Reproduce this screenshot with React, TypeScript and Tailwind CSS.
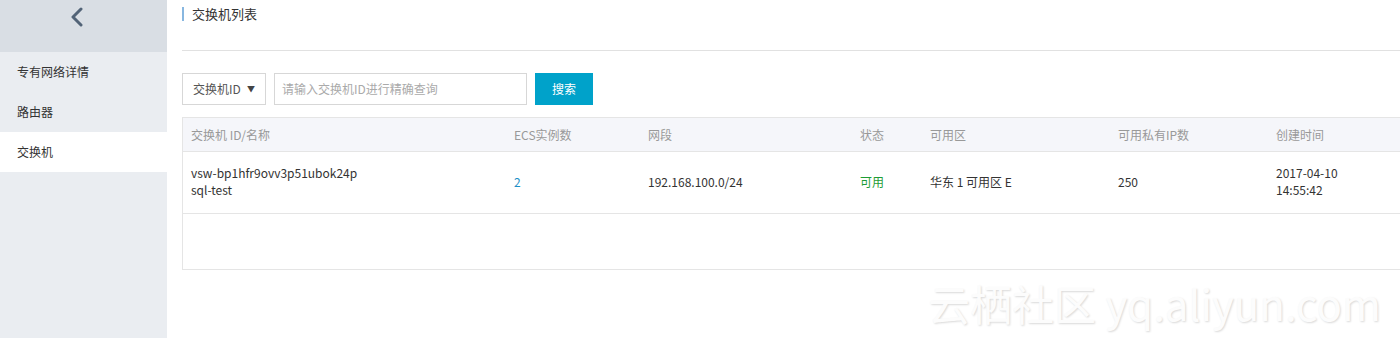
import React from "react";

const font = { fontFamily: '"Noto Sans CJK SC", "Noto Sans", sans-serif' };

export default function App() {
  const cols = "grid grid-cols-[323px_134px_212px_70px_188px_158px_1fr]";
  return (
    <div className="relative flex h-[338px] w-[1400px] overflow-hidden bg-white text-[12px] text-[#333]" style={font}>
      <aside className="flex w-[167px] shrink-0 flex-col bg-[#eaedf1]">
        <div className="flex h-[52px] items-start justify-center bg-[#d9dee4] pt-[7px]">
          <svg width="14" height="20" viewBox="0 0 14 20" className="ml-[-14px]">
            <path d="M11 2 L3 10 L11 18" fill="none" stroke="#526377" strokeWidth="3" strokeLinecap="round" strokeLinejoin="round" />
          </svg>
        </div>
        <div className="flex h-10 items-center pl-[17px]">专有网络详情</div>
        <div className="flex h-10 items-center pl-[17px]">路由器</div>
        <div className="flex h-10 items-center bg-white pl-[17px]">交换机</div>
      </aside>
      <main className="flex-1 overflow-hidden pl-[15px]">
        <div className="flex h-[51px] items-start border-b border-[#e1e1e1] pt-[7px]">
          <span className="h-[14px] w-[2px] bg-[#88b7e0]" />
          <span className="ml-[8px] mt-[-2px] text-[13px] leading-[18px] text-[#333]">交换机列表</span>
        </div>
        <div className="mt-[22px] flex h-[32px] items-stretch">
          <div className="flex w-[84px] items-center justify-between border border-[#d7d7d7] pl-[10px] pr-[10px] text-[#555]">
            <span>交换机ID</span>
            <span className="text-[8px] text-[#444]">▼</span>
          </div>
          <div className="ml-[8px] flex w-[253px] items-center border border-[#d7d7d7] pl-[7px] text-[#aaa]">
            请输入交换机ID进行精确查询
          </div>
          <button className="ml-[8px] w-[58px] bg-[#00a2ca] text-[12px] text-white">搜索</button>
        </div>
        <div className="mt-[12px] w-[1226px] border border-[#e5e5e5]">
          <div className={`${cols} h-[33px] items-center bg-[#f5f6fa] text-[#999]`}>
            <div className="pl-[8px]">交换机 ID/名称</div>
            <div className="pl-[8px]">ECS实例数</div>
            <div className="pl-[8px]">网段</div>
            <div className="pl-[8px]">状态</div>
            <div className="pl-[8px]">可用区</div>
            <div className="pl-[8px]">可用私有IP数</div>
            <div className="pl-[8px]">创建时间</div>
          </div>
          <div className={`${cols} h-[62px] items-center border-t border-[#e5e5e5] pb-[3px] leading-[17px]`}>
            <div className="pl-[8px]">
              <div>vsw-bp1hfr9ovv3p51ubok24p</div>
              <div>sql-test</div>
            </div>
            <div className="pl-[8px] text-[#1e8fc6]">2</div>
            <div className="pl-[8px]">192.168.100.0/24</div>
            <div className="pl-[8px] text-[#1e9d35]">可用</div>
            <div className="pl-[8px]">华东 1 可用区 E</div>
            <div className="pl-[8px]">250</div>
            <div className="pl-[8px]">
              <div>2017-04-10</div>
              <div>14:55:42</div>
            </div>
          </div>
          <div className="h-[56px] border-t border-[#e5e5e5]" />
        </div>
      </main>
      <div className="pointer-events-none absolute left-[928px] top-[278px] whitespace-nowrap text-[42px] leading-[50px] text-[#fcfcfc] [text-shadow:1px_1px_2px_rgba(0,0,0,0.15)]" style={font}>
        云栖社区 yq.aliyun.com
      </div>
    </div>
  );
}
